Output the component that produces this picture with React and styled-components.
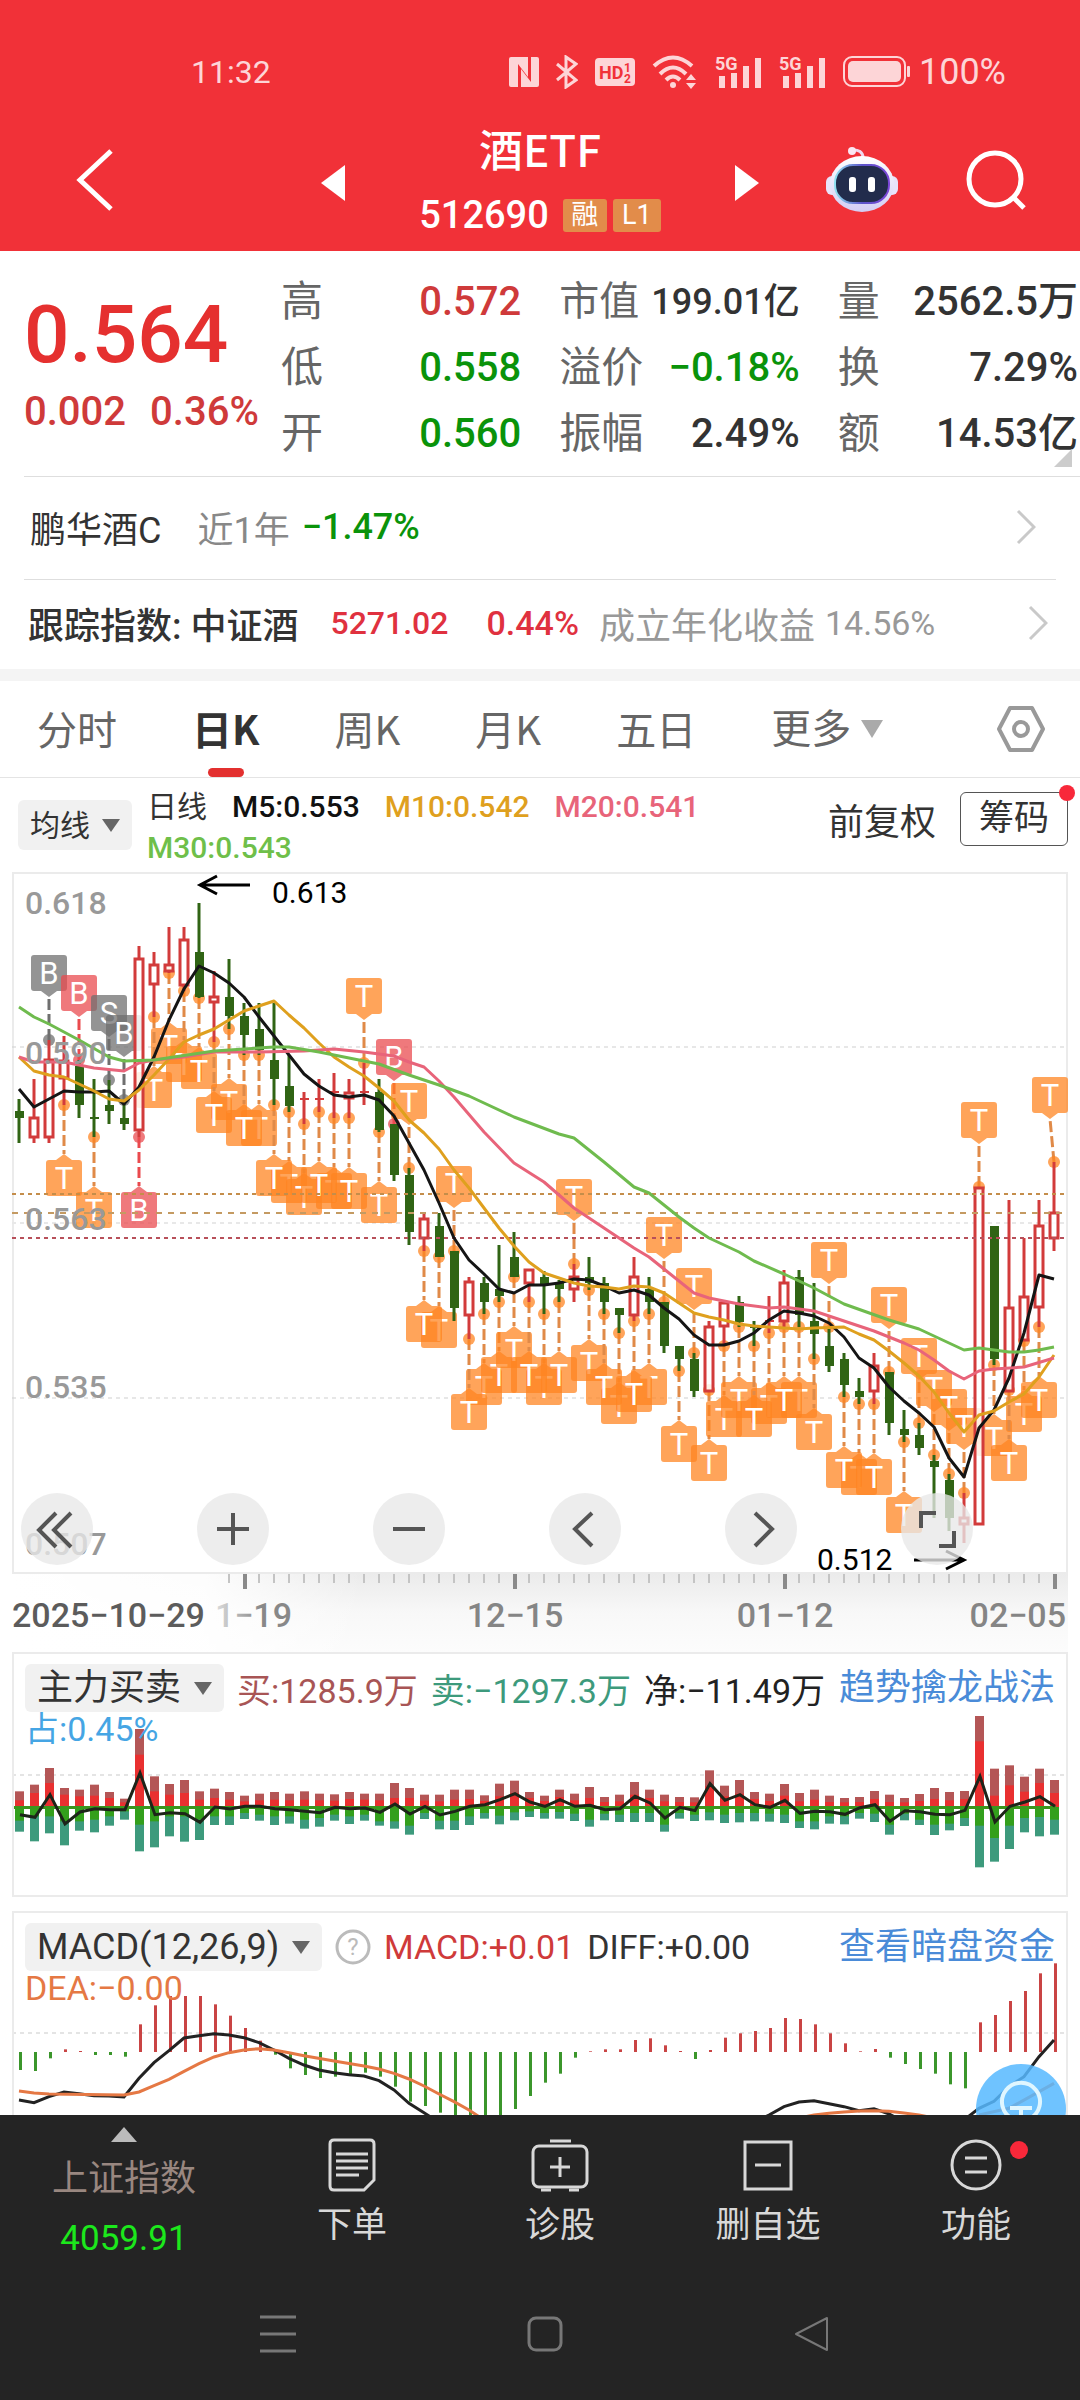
import React from "react";
import styled, { createGlobalStyle } from "styled-components";

const Global = createGlobalStyle`
  *, *::before, *::after { box-sizing: border-box; }
  body { margin: 0; background: #fff; }
  button, select { font: inherit; color: inherit; background: none; border: 0; padding: 0; margin: 0; }
  button { cursor: pointer; }
  a { text-decoration: none; }
  svg { display: block; }
`;

const RED = "#cf3a3a";
const GREEN = "#0a930a";
const CANDLE_RED = "#d23b3b";
const CANDLE_GREEN = "#306414";

const Screen = styled.div`
  display: flex;
  flex-direction: column;
  height: 100vh;
  font-family: Roboto, "Noto Sans CJK SC", sans-serif;
  color: #333;
  white-space: nowrap;
`;

/* ---------- top ---------- */
const Top = styled.header`
  flex: none;
  background: #f13138;
  color: #fff;
`;
const StatusBar = styled.div`
  display: flex;
  align-items: center;
  height: 116px;
  padding: 28px 74px 0 191px;
  font-size: 32px;
  color: #fdd5d7;
`;
const StatusIcons = styled.div`
  display: flex;
  align-items: center;
  gap: 17px;
  margin-left: auto;
`;
const Battery = styled.div`
  display: flex;
  align-items: center;
  gap: 9px;
  font-size: 36px;
`;
const TitleBar = styled.div`
  display: grid;
  grid-template-columns: 1fr 438px 1fr;
  align-items: center;
  height: 135px;
  padding-bottom: 4px;
`;
const Side = styled.div`
  display: flex;
  align-items: center;
  justify-content: ${(p) => (p.$end ? "flex-end" : "flex-start")};
  gap: 68px;
  padding: ${(p) => (p.$end ? "0 54px 6px 0" : "0 0 6px 76px")};
`;
const Switcher = styled.div`
  display: flex;
  align-items: center;
  justify-content: space-between;
`;
const TitleBlock = styled.div`
  display: flex;
  flex-direction: column;
  align-items: center;
`;
const Title = styled.h1`
  margin: 0;
  font: 500 44px/64px "Noto Sans CJK SC", sans-serif;
`;
const CodeLine = styled.div`
  display: flex;
  align-items: center;
  gap: 6px;
  font-size: 38px;
  line-height: 70px;
  font-weight: 500;
`;
const Code = styled.span`
  margin-right: 8px;
`;
const Tag = styled.span`
  width: ${(p) => (p.$wide ? 48 : 44)}px;
  height: 33px;
  border-radius: 3px;
  background: #e28c4a;
  font-size: 27px;
  font-weight: 400;
  line-height: 33px;
  text-align: center;
`;

/* ---------- body ---------- */
const Body = styled.main`
  position: relative;
  flex: 1;
  min-height: 0;
  overflow: hidden;
  background: #fff;
`;
const Quote = styled.section`
  position: relative;
  display: grid;
  grid-template-columns: 257px 1fr;
  padding: 18px 2px 9px 24px;
`;
const PriceBlock = styled.div`
  color: ${RED};
`;
const Price = styled.div`
  padding-top: 16px;
  font-size: 80px;
  line-height: 100px;
  font-weight: 500;
  color: #e5302f;
`;
const Change = styled.div`
  display: flex;
  gap: 24px;
  font-size: 40px;
  line-height: 54px;
  font-weight: 500;
`;
const Stats = styled.dl`
  display: grid;
  grid-template-columns: repeat(3, 1fr);
  column-gap: 38px;
  margin: 0;
`;
const Stat = styled.div`
  display: flex;
  justify-content: space-between;
  line-height: 66px;
  font-size: 40px;
`;
const StatName = styled.dt`
  font-size: ${(p) => (p.$small ? 40 : 42)}px;
  color: #666;
`;
const StatValue = styled.dd`
  margin: 0;
  font-weight: 500;
  color: ${(p) => p.$color || "#333"};
  font-size: ${(p) => (p.$small ? 36 : 40)}px;
`;
const Corner = styled.span`
  position: absolute;
  right: 8px;
  bottom: 9px;
  border: solid transparent;
  border-width: 0 0 18px 18px;
  border-bottom-color: #ccc;
`;
const InfoRow = styled.a`
  display: flex;
  align-items: center;
  margin-left: 24px;
  margin-right: ${(p) => (p.$inset ? 24 : 0)}px;
  padding-right: ${(p) => p.$pad}px;
  padding-bottom: 3px;
  height: ${(p) => p.$height}px;
  border-top: 1px solid #dedede;
  font-size: 36px;
  color: #333;
`;
const InfoText = styled.span`
  margin-left: ${(p) => p.$gap || 0}px;
  color: ${(p) => p.$color || "inherit"};
  font-weight: ${(p) => p.$weight || 400};
  font-size: ${(p) => p.$size || 36}px;
`;
const Arrow = styled.svg`
  margin-left: auto;
`;
const Band = styled.div`
  height: 12px;
  background: #f4f4f4;
`;
const Tabs = styled.nav`
  display: flex;
  gap: 75px;
  height: 97px;
  padding: 0 34px 0 37px;
  border-bottom: 1px solid #e4e4e4;
  color: #666;
`;
const Tab = styled.button`
  display: flex;
  flex-direction: column;
  align-items: center;
  justify-content: flex-end;
  font-family: "Noto Sans CJK SC", sans-serif;
  font-size: 40px;
  line-height: 60px;
  font-weight: ${(p) => (p.$on ? 700 : 400)};
  color: ${(p) => (p.$on ? "#333" : "#666")};
  &::after {
    content: "";
    width: 36px;
    height: 9px;
    margin-top: 10px;
    border-radius: 5px;
    background: ${(p) => (p.$on ? "#e3302f" : "transparent")};
  }
`;
const MoreBox = styled.label`
  display: flex;
  align-items: center;
  gap: 10px;
  font-size: 40px;
`;
const Picker = styled.select`
  appearance: none;
  outline: 0;
  line-height: inherit;
`;
const GearButton = styled.button`
  margin-left: auto;
`;
const Legend = styled.div`
  display: flex;
  align-items: center;
  height: 94px;
  padding: 0 12px 0 18px;
`;
const PickerBox = styled.label`
  flex: none;
  display: flex;
  align-items: center;
  gap: 12px;
  height: ${(p) => p.$height || 48}px;
  padding: 0 12px;
  border-radius: 6px;
  background: #f1f1f1;
  font-size: ${(p) => p.$size}px;
`;
const Averages = styled.div`
  flex: 1;
  display: flex;
  flex-wrap: wrap;
  column-gap: 25px;
  margin-left: 15px;
  padding-top: 4px;
  font-size: 30px;
  line-height: 41px;
  font-weight: 500;
`;
const Tint = styled.span`
  color: ${(p) => p.$color};
  font-weight: ${(p) => p.$weight || "inherit"};
`;
const Adjust = styled.button`
  margin-right: 24px;
  margin-bottom: 12px;
  font-size: 36px;
`;
const ChipButton = styled.button`
  position: relative;
  width: 108px;
  height: 54px;
  margin-bottom: 12px;
  border: 1px solid #555;
  border-radius: 6px;
  font-size: 35px;
  line-height: 52px;
`;
const Dot = styled.span`
  position: absolute;
  top: ${(p) => p.$top}px;
  right: ${(p) => p.$right}px;
  width: ${(p) => p.$size}px;
  height: ${(p) => p.$size}px;
  border-radius: 50%;
  background: #f8283a;
`;

/* ---------- charts ---------- */
const Panel = styled.section`
  position: relative;
  display: grid;
  grid-template-columns: minmax(0, 1fr);
  align-items: start;
  margin: 0 12px ${(p) => p.$gap || 0}px;
  border: 2px solid #ebebeb;
`;
const Chart = styled.svg`
  grid-area: 1 / 1;
  width: 100%;
  height: auto;
  overflow: ${(p) => (p.$spill ? "visible" : "hidden")};
  font-family: Roboto, sans-serif;
`;
const Axis = styled(Chart)`
  margin: 0 12px;
  width: calc(100% - 24px);
`;
const Controls = styled.div`
  position: absolute;
  left: -2px;
  right: -2px;
  bottom: 7px;
  display: grid;
  grid-template-columns: repeat(6, 1fr);
`;
const RoundButton = styled.button`
  width: 72px;
  height: 72px;
  margin-left: 9px;
  border-radius: 50%;
  background: rgba(232, 232, 232, 0.78);
`;
const PanelHead = styled.div`
  grid-area: 1 / 1;
  z-index: 1;
  padding: 10px 11px 0;
  font-size: 34px;
`;
const HeadLine = styled.div`
  display: flex;
  align-items: center;
  gap: ${(p) => p.$gap}px;
  height: 48px;
`;
const SubLine = styled.div`
  line-height: 34px;
  color: ${(p) => p.$color};
`;
const HeadLink = styled.a`
  margin-left: auto;
  font-size: 36px;
  line-height: 47px;
  color: #4a8bd8;
`;
const Float = styled.button`
  position: absolute;
  right: 14px;
  bottom: -39px;
  width: 90px;
  height: 90px;
`;

/* ---------- bottom ---------- */
const Bottom = styled.footer`
  flex: none;
  background: #242424;
  color: #d8d8d8;
`;
const ActionBar = styled.nav`
  display: grid;
  grid-template-columns: 31fr repeat(4, 26fr);
  height: 165px;
  font-size: 35px;
`;
const IndexCell = styled.button`
  display: flex;
  flex-direction: column;
  align-items: center;
  padding-top: 12px;
`;
const IndexName = styled.span`
  padding-top: 10px;
  font-size: 36px;
  line-height: 54px;
  color: #998780;
`;
const IndexValue = styled.span`
  font-size: 35px;
  line-height: 66px;
  color: #1ce81c;
`;
const Action = styled.button`
  display: flex;
  flex-direction: column;
  align-items: center;
  padding-top: 23px;
  line-height: 56px;
`;
const IconWrap = styled.span`
  position: relative;
  margin-bottom: 6px;
`;
const SystemBar = styled.div`
  display: grid;
  grid-template-columns: repeat(3, 1fr);
  justify-items: center;
  align-items: start;
  height: 120px;
  padding: 35px 134px 0 144px;
`;

/* ---------- data ---------- */
const X0 = 19;
const STEP = 15;
const cx = (i) => X0 + STEP * i;

/* r = rising, g = falling; high, body top, body bottom, low */
const candles = [
  ["g", 1099, 1111, 1118, 1143], ["r", 1079, 1117, 1138, 1143], ["r", 1040, 1059, 1138, 1143],
  ["r", 1036, 1060, 1079, 1105], ["g", 1060, 1066, 1105, 1118], ["g", 1079, 1117, 1119, 1137],
  ["g", 1080, 1105, 1111, 1124], ["g", 1100, 1118, 1124, 1130], ["r", 946, 958, 1131, 1137],
  ["r", 952, 964, 985, 1017], ["r", 927, 964, 972, 973], ["r", 927, 939, 986, 991],
  ["g", 903, 952, 997, 998], ["r", 971, 996, 1003, 1042], ["g", 959, 997, 1016, 1029],
  ["g", 1003, 1016, 1035, 1055], ["g", 1003, 1029, 1050, 1055], ["g", 1003, 1060, 1079, 1105],
  ["g", 1055, 1086, 1106, 1112], ["r", 1092, 1098, 1100, 1124], ["r", 1079, 1098, 1100, 1112],
  ["r", 1073, 1091, 1093, 1118], ["r", 1079, 1092, 1099, 1118], ["r", 1063, 1091, 1093, 1105],
  ["g", 1079, 1092, 1130, 1132], ["g", 1124, 1124, 1175, 1181], ["g", 1168, 1175, 1232, 1245],
  ["r", 1213, 1218, 1239, 1251], ["g", 1213, 1226, 1257, 1257], ["g", 1251, 1251, 1308, 1321],
  ["r", 1277, 1281, 1316, 1339], ["g", 1277, 1283, 1302, 1314], ["g", 1245, 1289, 1296, 1302],
  ["g", 1232, 1257, 1277, 1277], ["r", 1269, 1269, 1284, 1302], ["g", 1271, 1277, 1284, 1314],
  ["g", 1280, 1283, 1289, 1302], ["r", 1264, 1276, 1290, 1302], ["g", 1257, 1277, 1283, 1290],
  ["g", 1277, 1283, 1302, 1314], ["g", 1308, 1308, 1315, 1333], ["r", 1257, 1276, 1316, 1321],
  ["g", 1277, 1289, 1302, 1314], ["g", 1302, 1302, 1346, 1353], ["g", 1346, 1346, 1359, 1371],
  ["g", 1353, 1359, 1391, 1397], ["r", 1321, 1326, 1392, 1390], ["r", 1302, 1302, 1327, 1346],
  ["g", 1296, 1302, 1322, 1327], ["g", 1321, 1326, 1328, 1346], ["r", 1296, 1320, 1322, 1333],
  ["r", 1270, 1282, 1322, 1327], ["g", 1270, 1277, 1315, 1327], ["g", 1283, 1321, 1334, 1359],
  ["g", 1327, 1346, 1366, 1372], ["g", 1353, 1359, 1385, 1397], ["g", 1378, 1391, 1397, 1404],
  ["r", 1353, 1365, 1392, 1404], ["g", 1372, 1372, 1423, 1435], ["g", 1410, 1429, 1435, 1442],
  ["g", 1423, 1435, 1448, 1455], ["g", 1455, 1461, 1467, 1518], ["g", 1474, 1480, 1518, 1531],
  ["r", 1493, 1517, 1525, 1543], ["r", 1187, 1187, 1525, 1525], ["g", 1226, 1226, 1359, 1365],
  ["r", 1200, 1307, 1392, 1390], ["r", 1238, 1296, 1341, 1341], ["r", 1200, 1225, 1308, 1327],
  ["r", 1162, 1212, 1239, 1251],
];

const marksAbove = [
  [2, "B", "gray"], [4, "B", "red"], [6, "S", "gray"], [7, "B", "gray"], [23, "T"], [25, "B", "red"],
  [26, "T"], [29, "T"], [37, "T"], [43, "T"], [45, "T"], [54, "T"], [58, "T"], [60, "T"], [61, "T"],
  [62, "T"], [63, "T"], [64, "T"], [69, "T"],
];
const marksBelow = [
  10, 11, 14, 16, 18, 19, 21, 28, 31, 35, 40, 42, 50, 52, 56, 57, 67, 3, 5, 9, 12, 13, 15, 17, 20, 22, 24,
  27, 30, 32, 33, 34, 36, 38, 39, 41, 44, 46, 47, 48, 49, 51, 53, 55, 59, 65, 66, 68,
];
const markFill = { gray: "#6f6f6f", red: "#ea4a4e", orange: "#ff8420" };

const ma5 = [[0, 1089], [1, 1107], [3, 1091], [4, 1092], [5, 1092], [6, 1091], [7, 1104], [8, 1087], [9, 1057], [10, 1020], [11, 989], [12, 966], [13, 973], [14, 983], [15, 997], [16, 1017], [17, 1036], [18, 1055], [19, 1074], [20, 1086], [21, 1095], [22, 1097], [23, 1095], [24, 1100], [25, 1116], [26, 1143], [27, 1170], [28, 1203], [29, 1238], [30, 1260], [31, 1274], [32, 1289], [33, 1293], [34, 1285], [35, 1285], [36, 1283], [37, 1279], [38, 1280], [39, 1286], [40, 1293], [41, 1290], [42, 1295], [43, 1308], [44, 1319], [45, 1335], [46, 1345], [47, 1345], [48, 1341], [49, 1333], [50, 1320], [51, 1311], [52, 1313], [53, 1316], [54, 1323], [55, 1337], [56, 1358], [57, 1368], [58, 1387], [59, 1401], [60, 1413], [61, 1427], [62, 1458], [63, 1477], [64, 1428], [65, 1410], [66, 1378], [67, 1333], [68, 1275], [69, 1279]];
const ma10 = [[0, 1057], [1, 1071], [2, 1075], [3, 1077], [4, 1084], [5, 1091], [6, 1099], [7, 1101], [8, 1090], [9, 1075], [10, 1059], [11, 1042], [12, 1035], [13, 1029], [14, 1020], [15, 1011], [16, 1006], [17, 1001], [18, 1015], [19, 1028], [20, 1043], [21, 1057], [22, 1067], [23, 1076], [24, 1088], [25, 1101], [26, 1120], [27, 1133], [28, 1149], [29, 1170], [30, 1188], [31, 1208], [32, 1228], [33, 1246], [34, 1262], [35, 1273], [36, 1278], [37, 1283], [38, 1286], [39, 1287], [40, 1289], [41, 1286], [42, 1287], [43, 1293], [44, 1303], [45, 1313], [46, 1317], [47, 1320], [48, 1324], [49, 1326], [50, 1327], [52, 1329], [53, 1328], [55, 1327], [56, 1334], [57, 1340], [58, 1351], [59, 1363], [60, 1376], [61, 1392], [62, 1413], [63, 1432], [64, 1415], [65, 1411], [66, 1402], [67, 1394], [68, 1377], [69, 1355]];
const ma20 = [[0, 1057], [1, 1062], [3, 1062], [4, 1065], [5, 1068], [7, 1071], [8, 1063], [9, 1060], [11, 1057], [13, 1052], [16, 1052], [19, 1051], [21, 1049], [23, 1052], [25, 1056], [26, 1062], [27, 1067], [28, 1081], [29, 1097], [31, 1132], [33, 1163], [35, 1182], [37, 1208], [39, 1228], [41, 1248], [42, 1257], [43, 1269], [45, 1293], [46, 1298], [48, 1304], [50, 1308], [51, 1307], [53, 1311], [55, 1321], [57, 1331], [59, 1343], [60, 1350], [61, 1360], [62, 1371], [63, 1379], [64, 1371], [65, 1369], [67, 1367], [69, 1358]];
const ma30 = [[0, 1007], [1, 1017], [2, 1024], [4, 1040], [6, 1057], [7, 1061], [9, 1060], [13, 1051], [17, 1047], [18, 1047], [20, 1052], [22, 1058], [24, 1064], [26, 1075], [28, 1085], [30, 1096], [33, 1117], [36, 1134], [37, 1138], [39, 1162], [41, 1187], [42, 1193], [44, 1217], [45, 1228], [46, 1238], [48, 1252], [49, 1261], [51, 1274], [53, 1288], [55, 1304], [58, 1320], [60, 1329], [63, 1350], [64, 1348], [66, 1352], [67, 1352], [68, 1350], [69, 1347]];

/* total buys, large buys, total sells, large sells, net */
const flows = [
  [47, 20, 74, 41, -23], [67, 42, 103, 28, -31], [117, 72, 79, 28, 37], [57, 37, 115, 43, -51],
  [52, 32, 71, 43, -15], [67, 34, 76, 38, -5], [45, 27, 56, 28, -8], [25, 14, 38, 13, -8],
  [234, 157, 133, 53, 102], [92, 47, 121, 43, -23], [69, 37, 88, 28, -17], [81, 42, 104, 28, -20],
  [47, 22, 99, 38, -46], [55, 27, 54, 28, 0], [45, 22, 54, 28, -6], [34, 17, 36, 18, 2],
  [40, 20, 41, 23, 2], [45, 22, 54, 28, -5], [40, 20, 50, 28, -8], [47, 22, 65, 38, -13],
  [40, 20, 59, 33, -17], [38, 19, 41, 23, -1], [45, 24, 51, 28, -5], [40, 22, 41, 23, -3],
  [40, 20, 56, 43, -16], [72, 27, 65, 43, 9], [57, 27, 83, 56, -21], [37, 19, 36, 18, 2],
  [37, 17, 67, 41, -24], [52, 22, 69, 41, -13], [52, 24, 54, 28, 2], [35, 18, 35, 18, 7],
  [70, 32, 52, 26, 22], [79, 42, 40, 16, 40], [45, 27, 30, 13, 15], [34, 18, 35, 18, 2],
  [52, 30, 35, 15, 22], [40, 20, 42, 20, 2], [60, 27, 59, 38, 5], [30, 15, 40, 20, -8],
  [37, 17, 45, 23, -5], [75, 37, 45, 18, 32], [52, 27, 45, 18, 12], [37, 17, 74, 53, -33],
  [30, 15, 35, 18, -1], [29, 14, 42, 23, -11], [110, 62, 40, 16, 70], [64, 32, 48, 23, 20],
  [81, 40, 46, 18, 37], [45, 24, 43, 18, 7], [40, 18, 44, 20, -1], [69, 34, 48, 23, 20],
  [42, 17, 63, 43, -19], [52, 22, 67, 43, -13], [34, 15, 50, 28, -14], [27, 14, 52, 28, -22],
  [30, 15, 35, 18, -2], [48, 24, 45, 20, 7], [37, 15, 83, 53, -43], [27, 14, 40, 20, -11],
  [39, 18, 54, 38, -14], [57, 24, 84, 53, -22], [45, 20, 70, 50, -23], [48, 24, 57, 33, -10],
  [273, 197, 181, 56, 92], [115, 34, 164, 93, -45], [125, 65, 126, 56, 2], [91, 46, 76, 33, 15],
  [115, 72, 88, 30, 31], [81, 42, 83, 38, 2],
];

const macdBars = [
  -54, -57, -19, 8, 3, -9, -9, -14, 83, 140, 168, 168, 168, 143, 109, 72, 34, -8, -49, -69, -78, -74, -70,
  -62, -74, -104, -149, -162, -182, -204, -214, -204, -189, -171, -132, -92, -65, -44, -17, 2, 8, 8, 36, 41,
  20, 3, -21, 6, 43, 56, 63, 72, 102, 99, 83, 56, 26, 2, 9, -17, -36, -51, -65, -97, -109, 89, 111, 153,
  183, 236, 266,
].filter((v) => v !== -44);
const diff = [[0, 630], [1, 638], [2, 620], [3, 606], [4, 611], [5, 617], [6, 618], [7, 621], [8, 565], [9, 518], [10, 482], [11, 444], [12, 437], [13, 431], [14, 435], [15, 443], [16, 458], [17, 480], [18, 505], [19, 525], [20, 540], [21, 548], [22, 554], [23, 558], [24, 572], [25, 600], [26, 640], [27, 668], [28, 698]];
const diffTail = [[49, 698], [50, 675], [51, 650], [52, 636], [53, 632], [54, 641], [55, 650], [56, 662], [57, 656], [58, 672], [59, 695]];
const diffEnd = [[63, 690], [64, 655], [65, 634], [66, 590], [67, 560], [68, 500], [69, 450]];
const dea = [[0, 603], [1, 609], [2, 612], [7, 615], [8, 606], [9, 587], [10, 568], [11, 544], [12, 521], [13, 501], [14, 488], [15, 480], [16, 476], [17, 480], [18, 488], [19, 497], [21, 513], [23, 528], [24, 537], [25, 550], [26, 567], [27, 588], [28, 612], [29, 635], [30, 660], [31, 690]];
const deaTail = [[52, 684], [53, 675], [54, 670], [55, 666], [56, 663], [57, 662], [58, 664], [59, 669], [60, 675], [61, 684]];
const deaEnd = [[64, 675], [66, 655], [69, 580]];

const points = (list) => list.map(([i, y]) => `${cx(i)},${y}`).join(" ");
const macdPoints = (list) => list.map(([i, y]) => `${cx(i)},${1890 + y / 3}`).join(" ");

/* ---------- drawing parts ---------- */
const Caret = ({ w = 18, h = 13, color = "#666" }) => (
  <svg width={w} height={h} viewBox="0 0 18 13" preserveAspectRatio="none" aria-hidden="true">
    <path d="M0 0H18L9 13Z" fill={color} />
  </svg>
);

const Chevron = ({ color = "#c9c9c9" }) => (
  <Arrow width="20" height="36" viewBox="0 0 20 36" aria-hidden="true">
    <path d="M2 2L18 18L2 34" fill="none" stroke={color} strokeWidth="3" />
  </Arrow>
);

function Marker({ i, letter, tone = "orange", below }) {
  const [, high, , , low] = candles[i];
  const x = cx(i);
  const bx = Math.min(x, 1050);
  const dot = below ? low : high;
  const top = below ? low + 55 : high - 85;
  const tip = below ? top - 6 : top + 42;
  const edge = below ? top : top + 36;
  const fill = markFill[tone];
  return (
    <g>
      <line x1={x} y1={dot} x2={bx} y2={tip} stroke={tone === "orange" ? "#e08a48" : fill} strokeWidth="3" strokeDasharray="11 4" />
      <g fill={fill} fillOpacity="0.74">
        <circle cx={x} cy={dot} r="6" />
        <path d={`M${bx - 18} ${top + 3}q0-3 3-3h30q3 0 3 3v30q0 3-3 3h-30q-3 0-3-3zM${bx - 8} ${edge}L${bx} ${tip}L${bx + 8} ${edge}z`} />
      </g>
      <text x={bx} y={top + 29} fontSize="31" fill="#fff" textAnchor="middle">{letter}</text>
    </g>
  );
}

const Candle = ({ i, data: [kind, high, top, bottom, low] }) => {
  const x = cx(i);
  const color = kind === "r" ? CANDLE_RED : CANDLE_GREEN;
  const hollow = kind === "r" && bottom - top > 4;
  return (
    <g fill={color} stroke={color}>
      {high < top && <line x1={x} x2={x} y1={high} y2={top} strokeWidth="3" />}
      {low > bottom && <line x1={x} x2={x} y1={bottom} y2={low} strokeWidth="3" />}
      {hollow ? (
        <rect x={x - 4} y={top + 1} width="8" height={bottom - top - 2} fill="#fff" fillOpacity="0.85" strokeWidth="3" />
      ) : (
        <rect x={x - 4} y={top} width="9" height={Math.max(bottom - top, 2)} stroke="none" />
      )}
    </g>
  );
};

const Line = ({ list, color }) => (
  <polyline points={points(list)} fill="none" stroke={color} strokeWidth="3" strokeLinejoin="round" />
);

const Guide = ({ y, color, dash = "4 4", width = 1 }) => (
  <line x1="12" x2="1066" y1={y} y2={y} stroke={color} strokeWidth={width} strokeDasharray={dash} />
);

const KChart = () => (
  <Chart viewBox="14 874 1052 698" $spill role="img" aria-label="日K">
    <Guide y={1047} color="#cfcfcf" />
    <Guide y={1398} color="#cfcfcf" />
    <Guide y={1223} color="#e8e8e8" width={2} />
    {marksBelow.map((i) => <Marker key={i} i={i} letter="T" below />)}
    <Marker i={8} letter="B" tone="red" below />
    {marksAbove.map(([i, letter, tone]) => <Marker key={i} i={i} letter={letter} tone={tone} />)}
    {candles.map((c, i) => <Candle key={i} i={i} data={c} />)}
    <Guide y={1194} color="#c48d4a" width={2} />
    <Guide y={1213} color="#c49a62" dash="6 6" width={2} />
    <Guide y={1238} color="#b8505a" width={2} />
    <Line list={ma5} color="#151515" />
    <Line list={ma10} color="#dfa01e" />
    <Line list={ma20} color="#e8647a" />
    <Line list={ma30} color="#6fbb4e" />
    <g fontSize="32" fill="#999" fontWeight="500">
      <text x="25" y="914">0.618</text>
      <text x="25" y="1064">0.590</text>
      <text x="25" y="1230">0.563</text>
      <text x="25" y="1398">0.535</text>
      <text x="25" y="1555">0.507</text>
    </g>
    <g fontSize="30" fill="#000">
      <text x="272" y="903">0.613</text>
      <text x="817" y="1570">0.512</text>
    </g>
    <path d="M250 885H200M217 876L200 885L217 894M914 1560H964M946 1551L964 1560L946 1569" fill="none" stroke="#000" strokeWidth="3" />
  </Chart>
);

const glyphs = [
  ["后退", "M35 20L18 37L35 54M50 20L33 37L50 54"],
  ["放大", "M36 20V52M20 36H52"],
  ["缩小", "M20 36H52"],
  ["向左", "M43 20L26 36L43 53"],
  ["向右", "M30 20L47 36L30 53"],
  ["全屏", "M20 35V20H35M38 53H53V38"],
];

const majors = { 15: 1, 33: 1, 51: 1, 69: 1 };
const TimeAxis = () => (
  <Axis viewBox="12 1574 1056 78" role="img" aria-label="日期">
    <defs>
      <linearGradient id="shade" x1="0" y1="0" x2="0" y2="1">
        <stop offset="0" stopColor="#ebebeb" />
        <stop offset="0.5" stopColor="#f8f8f8" />
        <stop offset="1" stopColor="#fcfcfc" />
      </linearGradient>
      <linearGradient id="fade" x1="0" y1="0" x2="1" y2="0">
        <stop offset="0" stopColor="#fff" />
        <stop offset="0.55" stopColor="#fff" stopOpacity="0.9" />
        <stop offset="1" stopColor="#fff" stopOpacity="0" />
      </linearGradient>
      <linearGradient id="dateFade" x1="0" y1="0" x2="1" y2="0">
        <stop offset="0" stopColor="#ddd" />
        <stop offset="0.6" stopColor="#888" />
      </linearGradient>
    </defs>
    <rect x="12" y="1574" width="1056" height="78" fill="url(#shade)" />
    <rect x="12" y="1574" width="350" height="78" fill="url(#fade)" />
    {candles.map((_, i) =>
      i < 14 ? null : (
        <rect key={i} x={cx(i) - 1} y="1574" width={majors[i] ? 4 : 2} height={majors[i] ? 15 : 9} fill={majors[i] ? "#8a8a8a" : "#c4c4c4"} />
      )
    )}
    <g fontSize="34" fill="#858585" fontWeight="500">
      <text x="12" y="1627" fill="#5c5c5c">2025−10−29</text>
      <text x="292" y="1627" textAnchor="end" fill="url(#dateFade)">1−19</text>
      <text x="515" y="1627" textAnchor="middle">12−15</text>
      <text x="785" y="1627" textAnchor="middle">01−12</text>
      <text x="1066" y="1627" textAnchor="end">02−05</text>
    </g>
  </Axis>
);

const FlowChart = () => (
  <Chart viewBox="14 1654 1052 241" role="img" aria-label="主力买卖">
    <Guide y={1775} color="#e4e4e4" width={2} />
    {flows.map(([buy, bigBuy, sell, bigSell], i) => (
      <g key={i}>
        <rect x={cx(i) - 4} y={1807 - buy / 3} width="9" height={buy / 3} fill="#b45656" />
        <rect x={cx(i) - 4} y={1807 - bigBuy / 3} width="9" height={bigBuy / 3} fill="#e93030" />
        <rect x={cx(i) - 4} y="1807" width="9" height={sell / 3} fill="#3d9a7c" />
        <rect x={cx(i) - 4} y="1807" width="9" height={bigSell / 3} fill="#339f1c" />
      </g>
    ))}
    <rect x="12" y="1806" width="1044" height="3" fill="#3b961d" />
    <polyline points={flows.map((f, i) => `${cx(i) + 1},${1807 - f[4] / 3}`).join(" ")} fill="none" stroke="#1d2419" strokeWidth="3" />
  </Chart>
);

const MacdChart = () => (
  <Chart viewBox="14 1913 1052 241" role="img" aria-label="MACD">
    <Guide y={2033} color="#e4e4e4" width={2} />
    {macdBars.map((v, i) => (
      <rect key={i} x={cx(i)} y={v > 0 ? 2052 - v / 3 : 2052} width="3" height={Math.abs(v) / 3} fill={v > 0 ? "#c94444" : "#3b962b"} />
    ))}
    <g fill="none" strokeWidth="3">
      <g stroke="#222">
        <polyline points={macdPoints(diff)} />
        <polyline points={macdPoints(diffTail)} />
        <polyline points={macdPoints(diffEnd)} />
      </g>
      <g stroke="#e57844">
        <polyline points={macdPoints(dea)} />
        <polyline points={macdPoints(deaTail)} />
        <polyline points={macdPoints(deaEnd)} />
      </g>
    </g>
  </Chart>
);

const Nfc = () => (
  <svg width="30" height="30" viewBox="0 0 30 30" aria-hidden="true">
    <path d="M2 0H19V20L9 7V30H2Q0 30 0 28V2Q0 0 2 0ZM22 0H28Q30 0 30 2V28Q30 30 28 30H12V12L22 25Z" fill="#fdd5d7" />
  </svg>
);
const Bluetooth = () => (
  <svg width="22" height="34" viewBox="0 0 22 34" aria-hidden="true">
    <path d="M1 9L20 25L10 32V2L20 9L1 25" fill="none" stroke="#fdd5d7" strokeWidth="3" />
  </svg>
);
const Hd = () => (
  <svg width="40" height="28" viewBox="0 0 40 28" aria-hidden="true">
    <rect width="40" height="28" rx="4" fill="#fdd5d7" />
    <g fill="#f13138" fontWeight="700">
      <text x="4" y="21" fontSize="18">HD</text>
      <text x="29" y="14" fontSize="12">1</text>
      <text x="29" y="25" fontSize="12">2</text>
    </g>
  </svg>
);
const Wifi = () => (
  <svg width="46" height="34" viewBox="0 0 46 34" aria-hidden="true">
    <g fill="none" stroke="#fdd5d7" strokeWidth="4">
      <path d="M2 11Q21 -6 40 11" />
      <path d="M8 19Q21 6 34 19" />
      <path d="M14 25Q21 18 28 25" />
    </g>
    <circle cx="21" cy="30" r="3" fill="#fdd5d7" />
    <path d="M34 25L39 19L44 25ZM34 28L39 34L44 28Z" fill="#fdd5d7" />
  </svg>
);
const Signal = () => (
  <svg width="47" height="40" viewBox="0 -3 47 40" aria-hidden="true">
    <text x="0" y="15" fontSize="18" fontWeight="700" fill="#fdd5d7">5G</text>
    <path d="M4 21h6v12h-6zM16 18h6v15h-6zM28 11h6v22h-6zM40 3h6v30h-6z" fill="#fdd5d7" />
  </svg>
);
const BatteryIcon = () => (
  <svg width="67" height="32" viewBox="0 0 67 32" aria-hidden="true">
    <rect x="1" y="1" width="61" height="29" rx="8" fill="none" stroke="#fdd5d7" strokeWidth="2" />
    <rect x="5" y="5" width="53" height="21" rx="5" fill="#fdd5d7" />
    <rect x="64" y="10" width="3" height="11" rx="1" fill="#fdd5d7" />
  </svg>
);
const Robot = () => (
  <svg width="72" height="68" viewBox="0 0 72 68" aria-hidden="true">
    <defs>
      <linearGradient id="shell" x1="0" y1="0" x2="0" y2="1">
        <stop offset="0" stopColor="#fff" />
        <stop offset="1" stopColor="#d3cdf4" />
      </linearGradient>
      <linearGradient id="rim" x1="0" y1="0" x2="1" y2="0">
        <stop offset="0" stopColor="#8fe0f0" />
        <stop offset="0.5" stopColor="#5b53c9" />
        <stop offset="1" stopColor="#7b46d8" />
      </linearGradient>
    </defs>
    <path d="M25 4Q37 3 37 12" fill="none" stroke="#f0d8ee" strokeWidth="3" />
    <circle cx="26" cy="5" r="4" fill="#fbe6f2" />
    <rect x="0" y="30" width="72" height="19" rx="6" fill="#e8e3fa" />
    <ellipse cx="36" cy="38" rx="32" ry="28" fill="url(#shell)" />
    <rect x="9" y="19" width="54" height="38" rx="18" fill="#222c4c" stroke="url(#rim)" strokeWidth="2" />
    <rect x="23" y="31" width="7" height="15" rx="3" fill="#fff" />
    <rect x="42" y="31" width="7" height="15" rx="3" fill="#fff" />
  </svg>
);

const stats = [
  ["高", "0.572", RED], ["市值", "199.01亿", null, true], ["量", "2562.5万"],
  ["低", "0.558", GREEN], ["溢价", "−0.18%", GREEN], ["换", "7.29%"],
  ["开", "0.560", GREEN], ["振幅", "2.49%"], ["额", "14.53亿"],
];

const actions = [
  ["下单", <svg key="a" width="48" height="54" viewBox="0 0 48 54" fill="none" stroke="#d8d8d8" strokeWidth="3"><path d="M6 2H42Q46 2 46 6V42L36 52H6Q2 52 2 48V6Q2 2 6 2Z" /><path d="M8 16H40M8 23H40M8 30H40M8 37H31" /></svg>],
  ["诊股", <svg key="b" width="58" height="54" viewBox="0 0 58 54" fill="none" stroke="#d8d8d8" strokeWidth="3"><rect x="2" y="8" width="54" height="41" rx="6" /><path d="M19 3H40M10 52H20M38 52H48M29 19V39M19 29H39" /></svg>],
  ["删自选", <svg key="c" width="50" height="54" viewBox="0 0 50 54" fill="none" stroke="#d8d8d8" strokeWidth="3"><rect x="2" y="4" width="46" height="47" /><path d="M12 27H38" /></svg>],
  ["功能", <svg key="d" width="52" height="54" viewBox="0 0 52 54" fill="none" stroke="#d8d8d8" strokeWidth="3"><circle cx="26" cy="27" r="24" /><path d="M15 20H37M15 34H37" /></svg>],
];

export default function App() {
  return (
    <Screen>
      <Global />
      <Top>
        <StatusBar>
          <span>11:32</span>
          <StatusIcons>
            <Nfc /><Bluetooth /><Hd /><Wifi /><Signal /><Signal />
            <Battery><BatteryIcon /><span>100%</span></Battery>
          </StatusIcons>
        </StatusBar>
        <TitleBar>
          <Side>
            <button aria-label="返回">
              <svg width="38" height="62" viewBox="0 0 38 62"><path d="M35 2L4 31L35 60" fill="none" stroke="#fff" strokeWidth="5" /></svg>
            </button>
          </Side>
          <Switcher>
            <button aria-label="上一个"><svg width="24" height="36"><path d="M24 0V36L0 18Z" fill="#fff" /></svg></button>
            <TitleBlock>
              <Title>酒ETF</Title>
              <CodeLine><Code>512690</Code><Tag>融</Tag><Tag $wide>L1</Tag></CodeLine>
            </TitleBlock>
            <button aria-label="下一个"><svg width="24" height="36"><path d="M0 0V36L24 18Z" fill="#fff" /></svg></button>
          </Switcher>
          <Side $end>
            <button aria-label="助手"><Robot /></button>
            <button aria-label="搜索">
              <svg width="60" height="60" viewBox="0 0 60 60" fill="none" stroke="#fff" strokeWidth="5"><circle cx="29" cy="29" r="26" /><path d="M47 47L58 58" /></svg>
            </button>
          </Side>
        </TitleBar>
      </Top>

      <Body>
        <Quote>
          <PriceBlock>
            <Price>0.564</Price>
            <Change><span>0.002</span><span>0.36%</span></Change>
          </PriceBlock>
          <Stats>
            {stats.map(([name, value, color, small]) => (
              <Stat key={name}>
                <StatName $small={small}>{name}</StatName>
                <StatValue $color={color} $small={small}>{value}</StatValue>
              </Stat>
            ))}
          </Stats>
          <Corner />
        </Quote>
        <InfoRow href="#fund" $height={103} $pad={44}>
          <InfoText $gap={6}>鹏华酒C</InfoText>
          <InfoText $gap={36} $color="#888">近1年</InfoText>
          <InfoText $gap={12} $color={GREEN} $weight={500}>−1.47%</InfoText>
          <Chevron />
        </InfoRow>
        <InfoRow href="#index" $height={90} $inset $pad={8}>
          <InfoText $gap={4} $weight={500}>跟踪指数: 中证酒</InfoText>
          <InfoText $gap={32} $color="#e0313f" $weight={500} $size={32}>5271.02</InfoText>
          <InfoText $gap={38} $color="#e0313f" $weight={500} $size={34}>0.44%</InfoText>
          <InfoText $gap={20} $color="#999">成立年化收益</InfoText>
          <InfoText $gap={10} $color="#999" $size={34}>14.56%</InfoText>
          <Chevron />
        </InfoRow>
        <Band />
        <Tabs>
          <Tab>分时</Tab>
          <Tab $on>日K</Tab>
          <Tab>周K</Tab>
          <Tab>月K</Tab>
          <Tab>五日</Tab>
          <MoreBox>
            <Picker aria-label="更多"><option>更多</option></Picker>
            <Caret w={22} h={18} color="#aaa" />
          </MoreBox>
          <GearButton aria-label="设置">
            <svg width="50" height="48" viewBox="0 0 50 48" fill="none" stroke="#999" strokeWidth="4"><path d="M14 3H36L47 24L36 45H14L3 24Z" strokeLinejoin="round" /><circle cx="25" cy="24" r="7" /></svg>
          </GearButton>
        </Tabs>
        <Legend>
          <PickerBox $size={30} $height={50}>
            <Picker aria-label="均线"><option>均线</option></Picker>
            <Caret />
          </PickerBox>
          <Averages>
            <Tint $color="#333" $weight={400}>日线</Tint>
            <Tint $color="#111">M5:0.553</Tint>
            <Tint $color="#dfa01e">M10:0.542</Tint>
            <Tint $color="#e8647a">M20:0.541</Tint>
            <Tint $color="#6fbf4a">M30:0.543</Tint>
          </Averages>
          <Adjust>前复权</Adjust>
          <ChipButton>筹码<Dot $top={-8} $right={-8} $size={16} /></ChipButton>
        </Legend>
        <Panel>
          <KChart />
          <Controls>
            {glyphs.map(([name, d]) => (
              <RoundButton key={name} aria-label={name}>
                <svg width="72" height="72" viewBox="0 0 72 72"><path d={d} fill="none" stroke="#555" strokeWidth="4" /></svg>
              </RoundButton>
            ))}
          </Controls>
        </Panel>
        <TimeAxis />
        <Panel $gap={14}>
          <FlowChart />
          <PanelHead>
            <HeadLine $gap={13}>
              <PickerBox $size={36}>
                <Picker aria-label="指标"><option>主力买卖</option></Picker>
                <Caret />
              </PickerBox>
              <Tint $color="#a85555">买:1285.9万</Tint>
              <Tint $color="#3d9a7c">卖:−1297.3万</Tint>
              <Tint $color="#222">净:−11.49万</Tint>
              <HeadLink href="#trend">趋势擒龙战法</HeadLink>
            </HeadLine>
            <SubLine $color="#45a5e4">占:0.45%</SubLine>
          </PanelHead>
        </Panel>
        <Panel>
          <MacdChart />
          <PanelHead>
            <HeadLine $gap={13}>
              <PickerBox $size={36}>
                <Picker aria-label="指标参数"><option>MACD(12,26,9)</option></Picker>
                <Caret />
              </PickerBox>
              <button aria-label="说明">
                <svg width="36" height="36" viewBox="0 0 36 36"><circle cx="18" cy="18" r="16" fill="none" stroke="#bbb" strokeWidth="3" /><text x="18" y="26" fontSize="24" fill="#bbb" textAnchor="middle">?</text></svg>
              </button>
              <Tint $color={RED}>MACD:+0.01</Tint>
              <Tint $color="#333">DIFF:+0.00</Tint>
              <HeadLink href="#dark">查看暗盘资金</HeadLink>
            </HeadLine>
            <SubLine $color="#e57844">DEA:−0.00</SubLine>
          </PanelHead>
        </Panel>
        <Float aria-label="交易">
          <svg width="90" height="90" viewBox="0 0 90 90"><circle cx="45" cy="45" r="45" fill="#56b8ff" fillOpacity="0.85" /><g fill="none" stroke="#dff6ff" strokeWidth="4"><path d="M37 55A19 19 0 1 1 53 55" /><path d="M34 44H56M45 44V60" /></g></svg>
        </Float>
      </Body>

      <Bottom>
        <ActionBar>
          <IndexCell>
            <svg width="26" height="15"><path d="M0 15L13 0L26 15Z" fill="#bbb" /></svg>
            <IndexName>上证指数</IndexName>
            <IndexValue>4059.91</IndexValue>
          </IndexCell>
          {actions.map(([name, icon], i) => (
            <Action key={name}>
              <IconWrap>{icon}{i === 3 && <Dot $top={3} $right={-26} $size={18} />}</IconWrap>
              {name}
            </Action>
          ))}
        </ActionBar>
        <SystemBar>
          <button aria-label="最近"><svg width="36" height="38"><path d="M0 2H36M0 19H36M0 36H36" stroke="#777" strokeWidth="3" /></svg></button>
          <button aria-label="主页"><svg width="36" height="38"><rect x="2" y="3" width="32" height="32" rx="7" fill="none" stroke="#777" strokeWidth="3" /></svg></button>
          <button aria-label="后退键"><svg width="36" height="38"><path d="M33 3V35L2 19Z" fill="none" stroke="#777" strokeWidth="2" strokeLinejoin="round" /></svg></button>
        </SystemBar>
      </Bottom>
    </Screen>
  );
}
